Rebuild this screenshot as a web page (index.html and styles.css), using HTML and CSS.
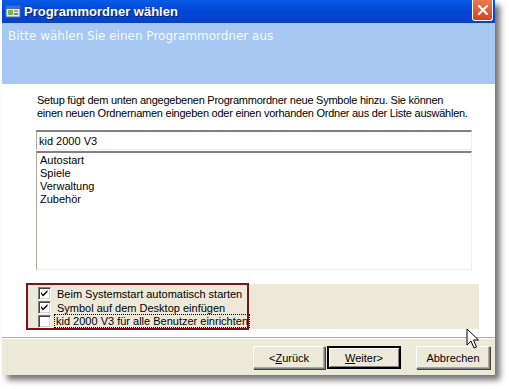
FILE: index.html
```html
<!DOCTYPE html>
<html lang="de">
<head>
  <meta charset="UTF-8">
  <title>Programmordner wählen</title>
  <link rel="stylesheet" href="styles.css">
</head>
<body>

<div class="window">
  <div class="titlebar">
    <svg class="title-icon" width="16" height="16" viewBox="0 0 16 16">
      <rect x="1" y="2" width="14" height="11" fill="#dfe8f5" stroke="#5a6f8c"/>
      <rect x="1" y="2" width="14" height="3" fill="#3a6fd0"/>
      <rect x="3" y="6" width="5" height="5" fill="#7cb342"/>
      <rect x="9" y="6" width="4" height="2" fill="#e0a030"/>
      <rect x="9" y="9" width="4" height="2" fill="#4a90d0"/>
    </svg>
    <span class="title-text">Programmordner wählen</span>
    <div class="close-btn">
      <svg width="12" height="12" viewBox="0 0 12 12">
        <path d="M2 2 L10 10 M10 2 L2 10" stroke="#fff" stroke-width="2.2" stroke-linecap="round"/>
      </svg>
    </div>
  </div>

  <div class="header">Bitte wählen Sie einen Programmordner aus</div>

  <div class="content">
    <p class="intro">Setup fügt dem unten angegebenen Programmordner neue Symbole hinzu. Sie können<br>einen neuen Ordnernamen eingeben oder einen vorhanden Ordner aus der Liste auswählen.</p>
    <div class="field">kid 2000 V3</div>
    <div class="listbox">
      <div class="list-item">Autostart</div>
      <div class="list-item">Spiele</div>
      <div class="list-item">Verwaltung</div>
      <div class="list-item">Zubehör</div>
    </div>

    <div class="options">
      <div class="options-box">
        <label class="check-row">
          <span class="checkbox"><svg width="11" height="11" viewBox="0 0 11 11"><path d="M2 4 L4 6.5 L8.5 2 L8.5 4 L4 8.5 L2 6 Z" fill="#000"/></svg></span>
          <span>Beim Systemstart automatisch starten</span>
        </label>
        <label class="check-row">
          <span class="checkbox"><svg width="11" height="11" viewBox="0 0 11 11"><path d="M2 4 L4 6.5 L8.5 2 L8.5 4 L4 8.5 L2 6 Z" fill="#000"/></svg></span>
          <span>Symbol auf dem Desktop einfügen</span>
        </label>
        <label class="check-row">
          <span class="checkbox"></span>
          <span class="focused">kid 2000 V3 für alle Benutzer einrichten</span>
        </label>
      </div>
    </div>
  </div>

  <div class="footer">
    <button class="btn">&lt;<span class="key">Z</span>urück</button>
    <button class="btn default"><span class="key">W</span>eiter&gt;</button>
    <button class="btn cancel">Abbrechen</button>
  </div>
</div>

<svg class="cursor" width="14" height="22" viewBox="0 0 14 22">
  <path d="M1 1 L1 17 L5 13 L8 20 L10.5 19 L7.5 12 L12.5 12 Z" fill="#fff" stroke="#000" stroke-width="1"/>
</svg>

</body>
</html>
```

FILE: styles.css
```css
body {
    margin: 0;
    background: #ffffff;
    font-family: 'Liberation Sans', Arial, sans-serif;
    font-size: 11px;
    color: #000;
    position: relative;
    height: 389px;
    overflow: hidden;
}

.window {
    width: 493px;
    margin-left: 2px;
    background: #ffffff;
    box-shadow: 5px 5px 6px rgba(0, 0, 0, 0.55);
}

.titlebar {
    height: 23px;
    background: linear-gradient(to bottom, #0a5ae8, #0046d5 50%, #0842c8);
    display: flex;
    align-items: center;
    padding-left: 3px;
}

.title-icon {
    flex-shrink: 0;
}

.title-text {
    color: #fff;
    font-family: 'Liberation Sans', Arial, sans-serif;
    font-weight: bold;
    font-size: 13px;
    margin-left: 3px;
    text-shadow: 1px 1px 0 #0a1e6a;
}

.close-btn {
    margin-left: auto;
    margin-right: 2px;
    margin-top: -3px;
    width: 19px;
    height: 20px;
    border: 1px solid #fff;
    border-top: none;
    border-radius: 0 0 3px 3px;
    background: linear-gradient(to bottom, #ea7a52, #d2431e);
    display: flex;
    align-items: center;
    justify-content: center;
}

.header {
    height: 61px;
    box-sizing: border-box;
    background: #a6c8f2;
    color: #f6f9ff;
    font-family: 'DejaVu Sans', sans-serif;
    font-size: 12px;
    padding: 6px 0 0 6px;
}

.content {
    padding: 10px 0 0 34px;
    height: 253px;
    box-sizing: border-box;
}

.intro {
    margin: 0 0 10px 1px;
    line-height: 13px;
    letter-spacing: -0.25px;
    white-space: nowrap;
}

.field {
    width: 436px;
    height: 20px;
    box-sizing: border-box;
    border-top: 2px solid #808080;
    border-left: 1px solid #aca899;
    border-right: 1px solid #f1efe2;
    border-bottom: 1px solid #f1efe2;
    padding: 2px 0 0 2px;
    line-height: 14px;
}

.listbox {
    width: 436px;
    height: 119px;
    box-sizing: border-box;
    margin-top: 1px;
    border-top: 2px solid #808080;
    border-left: 1px solid #aca899;
    border-right: 1px solid #f1efe2;
    border-bottom: 1px solid #f1efe2;
    padding: 1px 0 0 3px;
}

.list-item {
    line-height: 13px;
}

.options {
    margin: 14px 0 0 -10px;
    width: 453px;
    height: 45px;
    background: #ece9d8;
}

.options-box {
    width: 223px;
    height: 47px;
    box-sizing: border-box;
    position: relative;
    top: -1px;
    border: 2px solid #7b1416;
    display: flex;
    flex-direction: column;
    padding: 2px 0 0 10px;
}

.check-row {
    display: flex;
    align-items: center;
    height: 14px;
    gap: 6px;
    white-space: nowrap;
}

.checkbox {
    width: 13px;
    height: 13px;
    box-sizing: border-box;
    border-top: 1px solid #808080;
    border-left: 1px solid #808080;
    border-right: 1px solid #fff;
    border-bottom: 1px solid #fff;
    background: #fff;
    box-shadow: inset 1px 1px 0 #404040, inset -1px -1px 0 #d4d0c8;
    flex-shrink: 0;
    display: flex;
}

.focused {
    outline: 1px dotted #000;
    margin-left: -2px;
    padding: 0 1px;
}

.footer {
    border-top: 1px solid #aca899;
    box-shadow: inset 0 1px 0 #fff;
    background: #ece9d8;
    height: 37px;
    display: flex;
    align-items: center;
    padding: 0 5px 0 251px;
}

.btn {
    font-family: 'Liberation Sans', Arial, sans-serif;
    font-size: 11px;
    height: 23px;
    width: 72px;
    background: #ece9d8;
    border: 1px solid;
    border-color: #fff #808080 #808080 #fff;
    box-shadow: inset -1px -1px 0 #aca899, 1px 1px 0 #404040;
    padding: 0;
    color: #000;
    margin-top: 2px;
}

.btn.default {
    margin-left: 2px;
    width: 74px;
    border: 2px solid #000;
    box-shadow: inset 1px 1px 0 #fff, inset -1px -1px 0 #808080;
}

.btn.cancel {
    margin-left: 15px;
    width: 74px;
}

.key {
    text-decoration: underline;
}

.cursor {
    position: absolute;
    left: 466px;
    top: 328px;
}
```
